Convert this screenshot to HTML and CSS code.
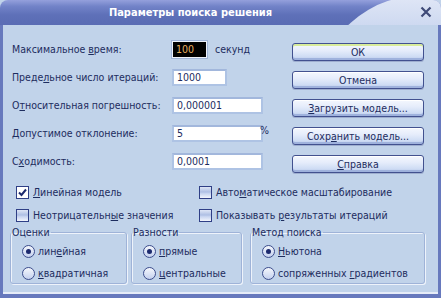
FILE: index.html
```html
<!DOCTYPE html>
<html lang="ru">
<head>
<meta charset="utf-8">
<link rel="stylesheet" href="styles.css">
</head>
<body>
<div class="window">
  <div class="titlebar">
    <span class="title">Параметры поиска решения</span>
    <span class="close">
      <svg width="12" height="12" viewBox="0 0 12 12"><path d="M1.5 1.5 L10.5 10.5 M10.5 1.5 L1.5 10.5" stroke="#3f4a78" stroke-width="2.2" fill="none"/></svg>
    </span>
  </div>
  <div class="body">
    <div class="top">
      <div class="fields">
        <div class="row"><span class="lbl">Максимальное <u>в</u>ремя:</span><span class="inp inp-sel">100</span><span class="unit">секунд</span></div>
        <div class="row"><span class="lbl">Преде<u>л</u>ьное число итераций:</span><span class="inp inp-s">1000</span></div>
        <div class="row"><span class="lbl">О<u>т</u>носительная погрешность:</span><span class="inp inp-l">0,000001</span></div>
        <div class="row"><span class="lbl"><u>Д</u>опустимое отклонение:</span><span class="inp inp-l">5</span><span class="unit pct">%</span></div>
        <div class="row"><span class="lbl">С<u>х</u>одимость:</span><span class="inp inp-l">0,0001</span></div>
      </div>
      <div class="buttons">
        <div class="btn btn-def"><span>ОК</span></div>
        <div class="btn"><span>Отмена</span></div>
        <div class="btn"><span><u>З</u>агрузить модель...</span></div>
        <div class="btn"><span>Сохр<u>а</u>нить модель...</span></div>
        <div class="btn"><span><u>С</u>правка</span></div>
      </div>
    </div>
    <div class="checks">
      <div class="chk"><span class="box checked"><svg width="11" height="11" viewBox="0 0 11 11"><path d="M2 5.5 L4.5 8 L9 2.5" stroke="#1c2a6e" stroke-width="2" fill="none"/></svg></span><span><u>Л</u>инейная модель</span></div>
      <div class="chk"><span class="box"></span><span>Авто<u>м</u>атическое масштабирование</span></div>
      <div class="chk"><span class="box"></span><span>Неотрицательн<u>ы</u>е значения</span></div>
      <div class="chk"><span class="box"></span><span>Показывать <u>р</u>езультаты итераций</span></div>
    </div>
    <div class="groups">
      <fieldset class="grp g1">
        <legend>Оценки</legend>
        <div class="rad"><span class="dot on"></span><span>лин<u>е</u>йная</span></div>
        <div class="rad"><span class="dot"></span><span><u>к</u>вадратичная</span></div>
      </fieldset>
      <fieldset class="grp g2">
        <legend>Разности</legend>
        <div class="rad"><span class="dot on"></span><span><u>п</u>рямые</span></div>
        <div class="rad"><span class="dot"></span><span><u>ц</u>ентральные</span></div>
      </fieldset>
      <fieldset class="grp g3">
        <legend>Метод поиска</legend>
        <div class="rad"><span class="dot on"></span><span><u>Н</u>ьютона</span></div>
        <div class="rad"><span class="dot"></span><span>сопряженных <u>г</u>радиентов</span></div>
      </fieldset>
    </div>
  </div>
</div>
</body>
</html>
```

FILE: styles.css
```css
* { box-sizing: border-box; }
html, body { margin: 0; padding: 0; background: #c1d3ea; }
body { font-family: "DejaVu Sans Condensed", "DejaVu Sans", sans-serif; font-stretch: condensed; font-size: 10.5px; color: #1d2c5e; white-space: nowrap; }
u { text-decoration: underline; text-underline-offset: 1px; }

.window {
  width: 441px; height: 298px;
  background: #c1d3ea;
  display: flex; flex-direction: column;
}

.titlebar {
  height: 25px; position: relative; flex: none;
  border-radius: 8px 8px 0 0;
  background: linear-gradient(to bottom, #94a0dc 0%, #7283c8 25%, #5e70b8 60%, #5a6cb4 100%);
  display: flex; align-items: center; justify-content: center;
  overflow: hidden;
}
.titlebar::after {
  content: ""; position: absolute; right: -40px; top: -2px;
  width: 130px; height: 40px;
  border-radius: 40px 0 0 0;
  background: linear-gradient(to bottom, #dfe6f6, #c6d3ee);
  transform: skewX(-35deg);
}
.title { position: relative; z-index: 1; color: #fff; font-weight: bold; font-size: 11px; margin-left: -60px; margin-top: -1px; }
.close { position: absolute; right: 9px; top: 6px; z-index: 1; display: flex; }

.body {
  flex: 1;
  border-left: 3px solid #6779bd;
  border-right: 3px solid #6779bd;
  border-bottom: 4px solid #6779bd;
  box-shadow: inset 0 -2px 0 #e6ecf8;
  padding: 10px 0 0 9px;
  display: flex; flex-direction: column;
}

.top { display: flex; }
.fields { width: 280px; display: flex; flex-direction: column; }
.row { height: 28px; display: flex; align-items: center; }
.lbl { width: 160px; flex: none; }
.inp {
  height: 17px; background: #fff; border: 2px solid #aec3e4; border-top-color: #a2b7dc;
  padding: 0 3px; line-height: 13px; color: #1d2c5e; display: flex; align-items: center;
}
.inp-sel { width: 35px; background: #000; color: #e8b060; border-color: #eef2fa; border-width: 1px; outline: 1px solid #9fb3d6; }
.inp-s { width: 55px; }
.inp-l { width: 91px; }
.unit { margin-left: 8px; }
.pct { margin-left: -3px; position: relative; top: -3px; }

.buttons { display: flex; flex-direction: column; gap: 10px; margin-left: 0; padding-top: 8px; }
.btn {
  width: 132px; height: 18px;
  border: 1px solid #42518f; border-radius: 3px;
  background: linear-gradient(to bottom, #f4f7fe 0%, #e6edfb 40%, #cedcf4 80%, #b5c5e8 100%);
  box-shadow: inset 0 1px 0 #fff, inset 0 -2px 0 #9fb2dd, 0 1px 0 #9eaecf;
  display: flex; align-items: center; justify-content: center;
  color: #1d2c5e; line-height: 1;
}
.btn-def { box-shadow: inset 0 2px 0 #d8ec9a, inset 0 -2px 0 #9fb2dd, 0 1px 0 #9eaecf; }

.checks {
  display: grid; grid-template-columns: 183px auto;
  row-gap: 9px; margin-top: 10px; padding-left: 4px;
}
.chk { display: flex; align-items: center; height: 14px; }
.box {
  width: 13px; height: 13px; flex: none; margin-right: 4px;
  border: 1px solid #2f3f86;
  background: linear-gradient(to bottom, #dfe6f6 0%, #aebfe4 45%, #c8d5f0 60%, #f2f5fc 100%);
  display: flex; align-items: center; justify-content: center;
}
.box.checked { background: #fff; }

.groups { display: flex; margin-top: 4px; margin-left: -2px; }
.grp {
  flex: none;
  margin: 0; padding: 0 0 0 11px;
  border: 1px solid #9fb3d8; border-radius: 3px;
  box-shadow: 1px 1px 0 #eef3fb inset, 1px 1px 0 #eef3fb;
  height: 58px;
  display: flex; flex-direction: column; gap: 6px;
}
.grp legend { padding: 0 1px; margin-left: -11px; line-height: 12px; }
.g1 { width: 117px; }
.g2 { width: 111px; margin-left: 4px; }
.g3 { width: 175px; margin-left: 8px; }
.rad { display: flex; align-items: center; height: 16px; }
.rad:first-of-type { margin-top: 5px; }
.dot {
  width: 13px; height: 13px; border-radius: 50%; margin-right: 3px; flex: none;
  border: 1px solid #3c4c8c;
  background: linear-gradient(to bottom, #f5f7fd, #c4d1ee);
  display: flex; align-items: center; justify-content: center;
}
.dot.on::after { content: ""; width: 5px; height: 5px; border-radius: 50%; background: #1c2a6e; }
```
